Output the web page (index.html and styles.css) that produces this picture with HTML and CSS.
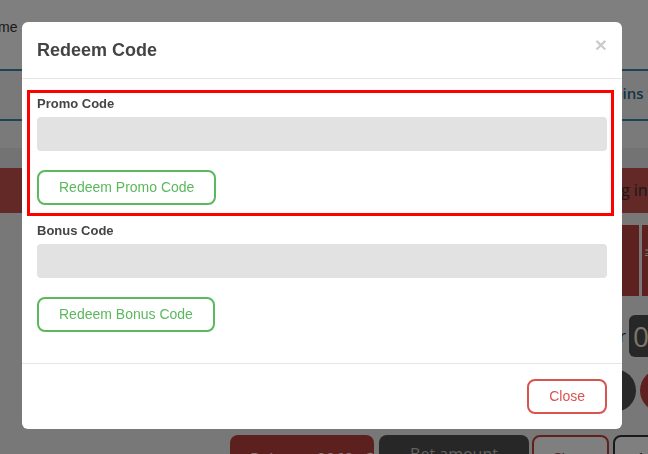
FILE: index.html
```html
<!DOCTYPE html>
<html lang="en">
<head>
    <meta charset="UTF-8">
    <meta name="viewport" content="width=device-width, initial-scale=1.0">
    <title>Redeem Code</title>
    <link rel="stylesheet" href="styles.css">
</head>
<body>
    <div class="page">
        <div class="topbar"><span class="user">me</span></div>
        <div class="tabs"><span class="tab-title">Spins for you</span></div>
        <div class="band-light"></div>
        <div class="band-dark"></div>
        <div class="login-bar">Log in to play</div>
        <div class="tiles">
            <div class="tile"></div>
            <div class="tile"></div>
            <div class="tile"></div>
            <div class="tile"></div>
            <div class="tile"></div>
            <div class="tile"></div>
            <div class="tile"><span class="tile-label">5x</span></div>
        </div>
        <div class="multiplier">
            <span class="mult-label">Multiplier</span>
            <span class="mult-value">0.00</span>
        </div>
        <div class="chips">
            <span class="chip"></span>
            <span class="chip"></span>
            <span class="chip"></span>
            <span class="chip"></span>
            <span class="chip"></span>
            <span class="chip chip-red"></span>
        </div>
        <div class="bet-row">
            <button class="balance">Balance: 2262
                <svg width="16" height="16" viewBox="0 0 16 16"><path d="M13 8a5 5 0 1 1-1.5-3.6" fill="none" stroke="#fff" stroke-width="2.2"/><path d="M14.5 1.5v5h-5z" fill="#fff"/></svg>
            </button>
            <div class="bet-amount">Bet amount</div>
            <button class="clear">Clear</button>
            <button class="plus">+1</button>
        </div>
    </div>

    <div class="backdrop"></div>

    <div class="modal">
        <div class="modal-header">
            <h4>Redeem Code</h4>
            <button class="close">&times;</button>
        </div>
        <div class="modal-body">
            <div class="form-group highlight">
                <label>Promo Code</label>
                <input type="text">
                <button class="btn btn-green">Redeem Promo Code</button>
            </div>
            <div class="form-group bonus">
                <label>Bonus Code</label>
                <input type="text">
                <button class="btn btn-green">Redeem Bonus Code</button>
            </div>
        </div>
        <div class="modal-footer">
            <button class="btn btn-red">Close</button>
        </div>
    </div>
</body>
</html>
```

FILE: styles.css
```css
* {
    box-sizing: border-box;
    margin: 0;
    padding: 0;
}

body {
    font-family: 'Liberation Sans', Arial, sans-serif;
    background: #f1f1f1;
    overflow: hidden;
    width: 648px;
    height: 454px;
}

/* page under the dialog */
.page {
    font-family: 'Open Sans', sans-serif;
    white-space: nowrap;
}

.topbar {
    height: 69px;
    background: #ffffff;
    padding-top: 18px;
    font-family: 'Liberation Sans', Arial, sans-serif;
    font-size: 14px;
    line-height: 18px;
    color: #333333;
}

.user {
    margin-left: -2px;
}

.tabs {
    height: 52px;
    background: #f3f3f3;
    border-top: 2px solid #3b88ab;
    border-bottom: 2px solid #3b88ab;
    padding-left: 605px;
    font-size: 15px;
    font-weight: 600;
    line-height: 44px;
    color: #2c6b88;
}

.band-light {
    height: 27px;
    background: #f5f5f5;
}

.band-dark {
    height: 20px;
    background: #e7e7e7;
}

.login-bar {
    height: 45px;
    background: #c4524d;
    padding-left: 603px;
    font-size: 16px;
    line-height: 45px;
    color: #333333;
}

.tiles {
    display: flex;
    gap: 3px;
    margin-top: 12px;
    padding-left: 24px;
}

.tile {
    flex: 0 0 100px;
    height: 71px;
    background: #bb4540;
}

.tile-label {
    display: inline-block;
    margin: 20px 0 0 3px;
    font-size: 8px;
    color: #eeeeee;
    text-decoration: underline;
}

.multiplier {
    display: flex;
    align-items: center;
    gap: 3px;
    margin-top: 19px;
    height: 42px;
}

.mult-label {
    flex: 0 0 626px;
    text-align: right;
    font-size: 16px;
    color: #333333;
}

.mult-value {
    flex: 0 0 auto;
    height: 42px;
    padding: 0 4px;
    background: #4e4e4e;
    border-radius: 6px;
    font-size: 28px;
    line-height: 42px;
    color: #f3ecd8;
}

.chips {
    display: flex;
    gap: 4px;
    margin-top: 12px;
    padding-left: 405px;
}

.chip {
    flex: 0 0 43px;
    height: 43px;
    border-radius: 50%;
    background: #515151;
}

.chip-red {
    background: #bb4540;
}

.bet-row {
    display: flex;
    margin-top: 23px;
    padding-left: 230px;
}

.bet-row > * {
    flex-shrink: 0;
    height: 40px;
    border-radius: 8px;
    font-family: 'Open Sans', sans-serif;
    font-size: 16px;
    line-height: 22px;
    padding-top: 8px;
    text-align: center;
}

.balance {
    width: 144px;
    border: none;
    background: #b9433e;
    color: #ffffff;
    padding-left: 20px;
    text-align: left;
}

.balance svg {
    margin-left: 4px;
    vertical-align: -2px;
}

.bet-amount {
    width: 150px;
    margin-left: 5px;
    background: #4e4e4e;
    color: #c4c4c4;
}

.clear {
    width: 77px;
    margin-left: 3px;
    border: 2px solid #c0403b;
    background: #ffffff;
    color: #b43a36;
}

.plus {
    width: 60px;
    margin-left: 4px;
    border: 2px solid #333333;
    background: #ffffff;
    color: #333333;
    text-align: left;
    padding-left: 12px;
}

/* dialog */
.backdrop {
    position: fixed;
    top: 0;
    left: 0;
    right: 0;
    bottom: 0;
    background: rgba(0, 0, 0, 0.5);
}

.modal {
    position: fixed;
    top: 22px;
    left: 22px;
    width: 600px;
    background: #ffffff;
    border-radius: 6px;
    color: #444444;
}

.modal-header {
    display: flex;
    justify-content: space-between;
    align-items: flex-start;
    padding: 15px;
    border-bottom: 1px solid #e5e5e5;
}

.modal-header h4 {
    font-size: 18px;
    font-weight: bold;
    line-height: 26px;
}

.close {
    margin-top: -3px;
    border: none;
    background: none;
    font-family: 'Liberation Sans', Arial, sans-serif;
    font-size: 21px;
    font-weight: bold;
    line-height: 1;
    color: #000000;
    opacity: 0.2;
}

.modal-body {
    padding: 11px 15px 31px;
}

.form-group label {
    display: block;
    font-size: 13px;
    font-weight: bold;
    line-height: 18px;
    margin-bottom: 4px;
}

.form-group input {
    display: block;
    width: 100%;
    height: 34px;
    border: none;
    border-radius: 4px;
    background: #e2e2e2;
}

.highlight {
    border: 3px solid #ff0000;
    margin: 0 -7px 0 -10px;
    padding: 2px 4px 8px 7px;
}

.bonus {
    margin-top: 6px;
}

.btn {
    padding: 7px 20px;
    border: 2px solid;
    border-radius: 8px;
    background: #ffffff;
    font-family: 'Liberation Sans', Arial, sans-serif;
    font-size: 14px;
    line-height: 17px;
}

.form-group .btn {
    margin-top: 19px;
}

.btn-green {
    border-color: #5cb85c;
    color: #5cb85c;
}

.btn-red {
    border-color: #d9534f;
    color: #d9534f;
}

.modal-footer {
    padding: 15px;
    border-top: 1px solid #e5e5e5;
    text-align: right;
}
```
